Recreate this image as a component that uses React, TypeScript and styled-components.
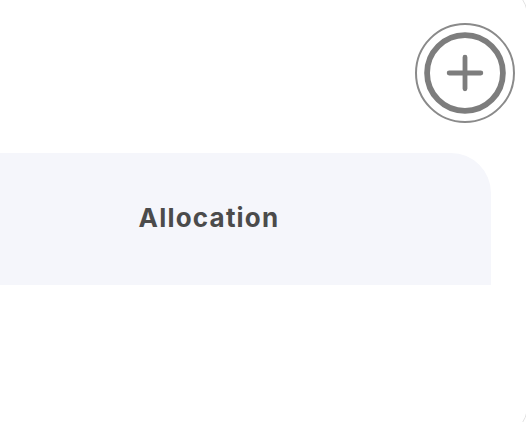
import styled, { createGlobalStyle } from 'styled-components'

const GlobalStyle = createGlobalStyle`
  html, body {
    margin: 0;
    padding: 0;
    background: #ffffff;
    overflow: hidden;
  }
  body {
    width: 526px;
    height: 422px;
    font-family: Inter, 'Open Sans', sans-serif;
  }
`

const Card = styled.div`
  box-sizing: border-box;
  width: 728px;
  height: 450px;
  margin: -14px 0 0 -200px;
  padding: 36px 12px 0 126px;
  background: #ffffff;
  border: 1px solid #e2e2e2;
  border-radius: 30px;
  display: flex;
  flex-direction: column;
`

const Toolbar = styled.div`
  display: flex;
  justify-content: flex-end;
`

const AddButton = styled.button`
  box-sizing: border-box;
  width: 100px;
  height: 100px;
  padding: 0;
  border: 2px solid #8a8a8a;
  border-radius: 50%;
  background: transparent;
  display: flex;
  align-items: center;
  justify-content: center;
  cursor: pointer;
`

const Panel = styled.div`
  margin: 30px 24px 0 0;
  height: 132px;
  background: #f5f6fb;
  border-top-right-radius: 40px;
  display: flex;
  align-items: center;
  justify-content: center;
`

const Title = styled.h2`
  margin: 0 0 4px;
  font-family: Inter, 'Open Sans', sans-serif;
  font-size: 26px;
  font-weight: 700;
  color: #4b4b4b;
  letter-spacing: 1.2px;
`

function PlusCircle() {
  return (
    <svg width="96" height="96" viewBox="0 0 100 100" fill="none">
      <circle cx="50" cy="50" r="39.5" stroke="#7d7d7d" strokeWidth="6" />
      <path
        d="M33.5 50h33M50 33.5v33"
        stroke="#7d7d7d"
        strokeWidth="5"
        strokeLinecap="round"
      />
    </svg>
  )
}

export default function App() {
  return (
    <>
      <GlobalStyle />
      <Card>
        <Toolbar>
          <AddButton aria-label="Add">
            <PlusCircle />
          </AddButton>
        </Toolbar>
        <Panel>
          <Title>Allocation</Title>
        </Panel>
      </Card>
    </>
  )
}
